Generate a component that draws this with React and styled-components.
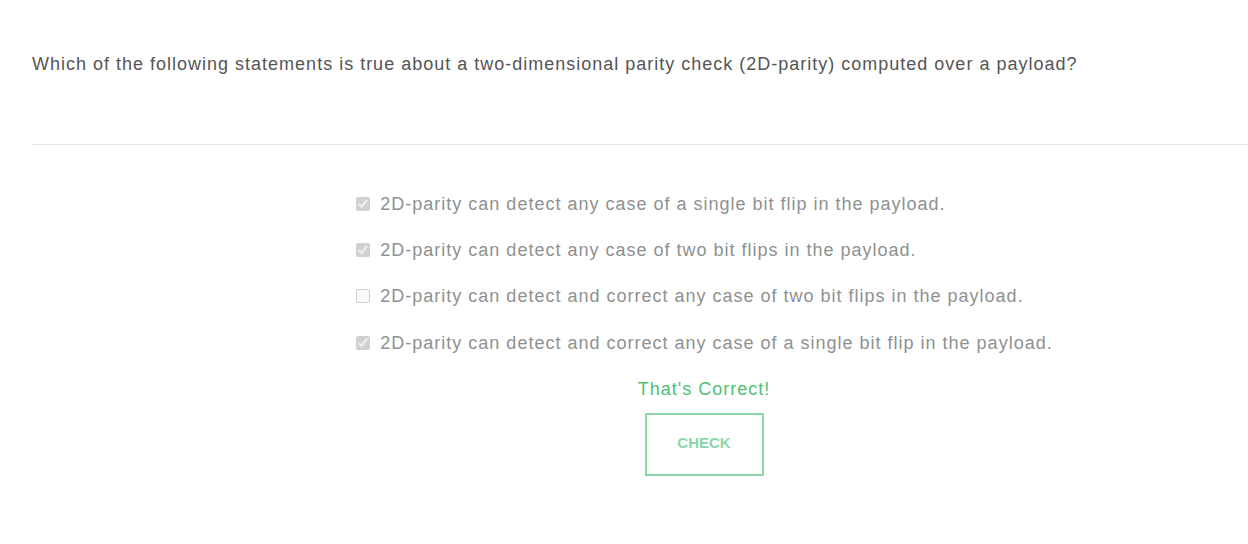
import React from "react";
import styled, { createGlobalStyle } from "styled-components";

const GlobalStyle = createGlobalStyle`
   body {
      margin: 0;
      background: #fff;
      font-family: "Liberation Sans", Arial, sans-serif;
      overflow: hidden;
   }
`;

const options = [
   { text: "2D-parity can detect any case of a single bit flip in the payload.", checked: true },
   { text: "2D-parity can detect any case of two bit flips in the payload.", checked: true },
   { text: "2D-parity can detect and correct any case of two bit flips in the payload.", checked: false },
   { text: "2D-parity can detect and correct any case of a single bit flip in the payload.", checked: true },
];

const App = () => {
   return (
      <Page>
         <GlobalStyle />
         <Question>
            Which of the following statements is true about a two-dimensional parity check (2D-parity)
            computed over a payload?
         </Question>
         <Divider />
         <Answers>
            <OptionList>
               {options.map((o) => (
                  <Option key={o.text}>
                     <Box type="checkbox" checked={o.checked} disabled readOnly />
                     <span>{o.text}</span>
                  </Option>
               ))}
            </OptionList>
            <Result>That's Correct!</Result>
            <CheckButton>CHECK</CheckButton>
         </Answers>
      </Page>
   );
};

export default App;

const Page = styled.div`
   width: 1344px;
   padding: 52px 0 0 32px;
`;

const Question = styled.p`
   margin: 0;
   font-size: 18px;
   line-height: 24px;
   letter-spacing: 1px;
   color: #555;
`;

const Divider = styled.hr`
   margin: 68px 0 0;
   border: none;
   border-top: 1px solid #e6e6e6;
`;

const Answers = styled.div`
   display: flex;
   flex-direction: column;
   align-items: center;
   padding-top: 47px;
`;

const OptionList = styled.div`
   display: flex;
   flex-direction: column;
   gap: 22px;
   padding-left: 1px;
   > :last-child {
      margin-top: 1px;
   }
`;

const Option = styled.label`
   display: flex;
   align-items: center;
   gap: 10px;
   font-size: 18px;
   line-height: 24px;
   letter-spacing: 1px;
   color: #8d9191;
`;

const Box = styled.input`
   margin: 0;
   width: 14px;
   height: 14px;
`;

const Result = styled.div`
   margin-top: 22px;
   font-size: 18px;
   line-height: 24px;
   letter-spacing: 1px;
   color: #4fbf73;
`;

const CheckButton = styled.button`
   margin-top: 12px;
   width: 119px;
   height: 63px;
   padding: 0 0 4px;
   background: #fff;
   border: 2px solid #8ad6a6;
   color: #8ad6a6;
   font-family: "Liberation Sans", Arial, sans-serif;
   font-weight: bold;
   font-size: 15px;
`;
